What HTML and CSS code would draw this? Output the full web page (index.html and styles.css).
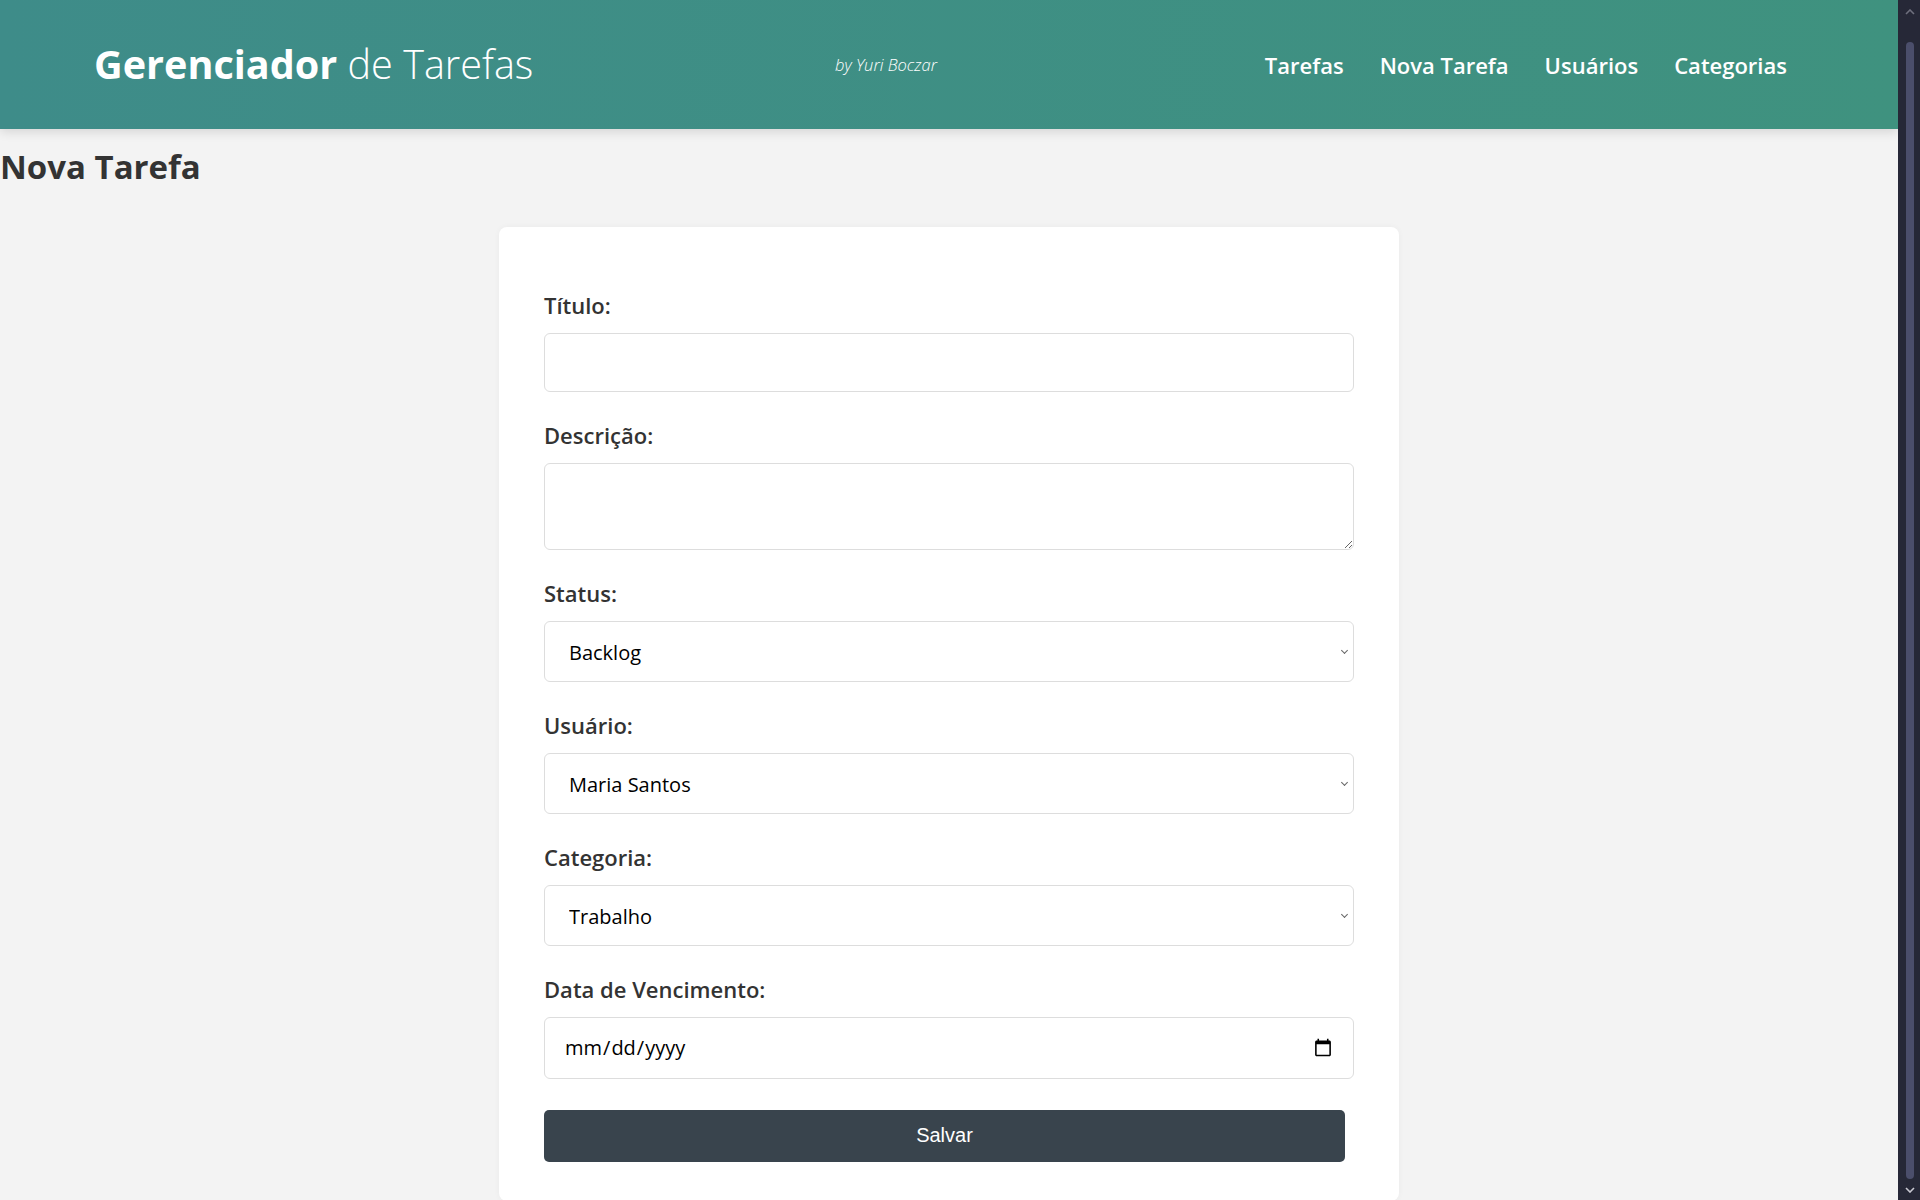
FILE: index.html
```html
<!DOCTYPE html>
<html lang="pt-BR">
<head>
<meta charset="utf-8">
<title>Gerenciador de Tarefas</title>
<link rel="stylesheet" href="styles.css">
</head>
<body>
<div class="page">
  <header class="topbar">
    <div class="brand"><span class="brand-strong">Gerenciador</span> <span class="brand-light">de Tarefas</span></div>
    <div class="byline">by Yuri Boczar</div>
    <nav class="nav">
      <a href="#" class="nav-link">Tarefas</a>
      <a href="#" class="nav-link">Nova Tarefa</a>
      <a href="#" class="nav-link">Usuários</a>
      <a href="#" class="nav-link">Categorias</a>
    </nav>
  </header>
  <main class="content">
    <h1 class="page-title">Nova Tarefa</h1>
    <form class="card">
      <div class="field">
        <label class="field-label" for="titulo">Título:</label>
        <input class="control" id="titulo" type="text">
      </div>
      <div class="field">
        <label class="field-label" for="descricao">Descrição:</label>
        <textarea class="control control-area" id="descricao"></textarea>
      </div>
      <div class="field">
        <label class="field-label" for="status">Status:</label>
        <div class="select-wrap">
          <select class="control control-select" id="status">
            <option>Backlog</option>
            <option>Em andamento</option>
            <option>Concluída</option>
          </select>
        </div>
      </div>
      <div class="field">
        <label class="field-label" for="usuario">Usuário:</label>
        <div class="select-wrap">
          <select class="control control-select" id="usuario">
            <option>Maria Santos</option>
            <option>João Silva</option>
          </select>
        </div>
      </div>
      <div class="field">
        <label class="field-label" for="categoria">Categoria:</label>
        <div class="select-wrap">
          <select class="control control-select" id="categoria">
            <option>Trabalho</option>
            <option>Pessoal</option>
          </select>
        </div>
      </div>
      <div class="field">
        <label class="field-label" for="vencimento">Data de Vencimento:</label>
        <input class="control control-date" id="vencimento" type="date">
      </div>
      <button class="save-btn" type="submit">Salvar</button>
    </form>
  </main>
</div>
<div class="scrollbar" aria-hidden="true">
  <svg class="scroll-arrow scroll-arrow-up" width="10" height="6" viewBox="0 0 10 6"><path d="M1 5 L5 1 L9 5" fill="none" stroke="#6e6f7d" stroke-width="1.6"/></svg>
  <div class="scroll-thumb"></div>
  <svg class="scroll-arrow scroll-arrow-down" width="10" height="6" viewBox="0 0 10 6"><path d="M1 1 L5 5 L9 1" fill="none" stroke="#c9c9d2" stroke-width="1.6"/></svg>
</div>
</body>
</html>
```
FILE: styles.css
```css
html {
  background: #f3f3f3;
}
body {
  margin: 0;
  display: flex;
  align-items: flex-start;
  background: #f3f3f3;
  color: #333;
  font-family: "Segoe UI", "Open Sans", sans-serif;
}
.page {
  flex: 1;
  min-width: 0;
}
.scrollbar {
  position: sticky;
  top: 0;
  flex: none;
  width: 22px;
  height: 100vh;
  box-sizing: border-box;
  padding: 9px 0 7px;
  display: flex;
  flex-direction: column;
  align-items: center;
  background: #262837;
}
.scroll-arrow {
  flex: none;
  margin-left: 1px;
}
.scroll-thumb {
  flex: 1;
  width: 8px;
  margin: 27px 0 8px 1px;
  border-radius: 4px;
  background: #4b4e6b;
}
.topbar {
  height: 129px;
  box-sizing: border-box;
  display: flex;
  align-items: center;
  justify-content: space-between;
  padding: 0 111px 0 94px;
  background: linear-gradient(to right, #3e8c89, #3f927f);
  box-shadow: 0 3px 10px rgba(0, 0, 0, 0.12);
  color: #fff;
}
.brand {
  font-size: 39.6px;
  line-height: 1;
  white-space: nowrap;
}
.brand-strong {
  font-weight: 700;
}
.brand-light {
  font-weight: 300;
}
.byline {
  margin-right: 26px;
  font-size: 16.5px;
  font-style: italic;
  font-weight: 300;
}
.nav {
  display: flex;
  gap: 36px;
}
.nav-link {
  color: #fff;
  text-decoration: none;
  font-size: 22px;
  font-weight: 600;
}
.content {
  padding-bottom: 20px;
}
.page-title {
  margin: 18px 0 40px;
  font-size: 33px;
  font-weight: 700;
  line-height: 1.2;
}
.card {
  width: 900px;
  box-sizing: border-box;
  margin: 0 auto;
  padding: 63px 45px 39px;
  background: #fff;
  border-radius: 8px;
  box-shadow: 0 0 6px rgba(0, 0, 0, 0.04);
}
.field {
  margin-bottom: 28px;
}
.field-label {
  display: block;
  font-size: 22px;
  font-weight: 600;
  line-height: 30px;
  margin-bottom: 13px;
}
.control {
  display: block;
  width: 100%;
  box-sizing: border-box;
  height: 59px;
  margin: 0;
  padding: 0 20px;
  border: 1px solid #ddd;
  border-radius: 6px;
  background: #fff;
  color: #000;
  font-family: inherit;
  font-size: 20px;
}
.control-area {
  height: 87px;
  resize: vertical;
}
.select-wrap {
  position: relative;
}
.control-select {
  -webkit-appearance: none;
  appearance: none;
  height: 61px;
  padding-left: 24px;
  padding-top: 2px;
}
.select-wrap::after {
  content: "";
  position: absolute;
  right: 7px;
  top: 27px;
  width: 4px;
  height: 4px;
  border-right: 1.5px solid #666;
  border-bottom: 1.5px solid #666;
  transform: rotate(45deg);
  pointer-events: none;
}
.control-date {
  height: 62px;
  padding: 0 18px 0 19px;
}
.save-btn {
  display: block;
  width: calc(100% - 9px);
  height: 52px;
  margin-top: 31px;
  border: none;
  border-radius: 5px;
  background: #39444d;
  color: #fff;
  font-family: "Liberation Sans", Arial, sans-serif;
  font-size: 20px;
  cursor: pointer;
}
```
